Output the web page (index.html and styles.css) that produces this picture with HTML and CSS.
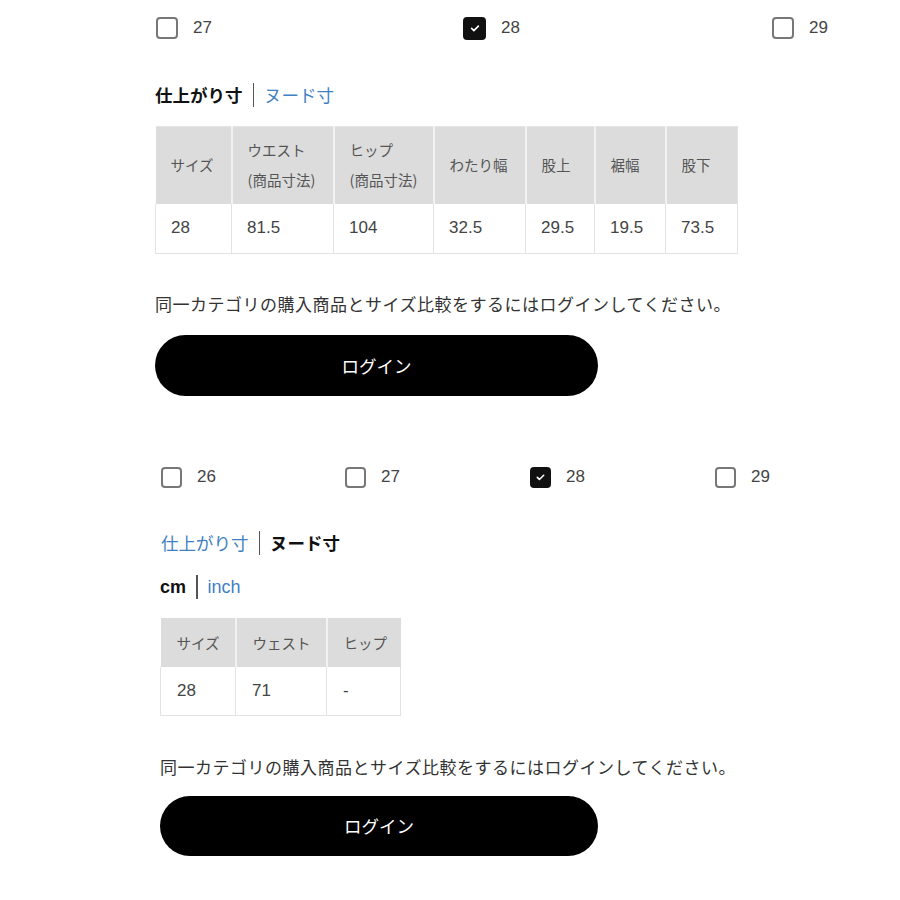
FILE: index.html
```html
<!DOCTYPE html>
<html lang="ja">
<head>
<meta charset="utf-8">
<link rel="stylesheet" href="styles.css">
</head>
<body>
<div class="page">
  <section class="block block-a">
    <div class="checks checks-a">
      <label class="check"><span class="box"></span><span class="num">27</span></label>
      <label class="check"><span class="box on"><svg viewBox="0 0 24 24"><path d="M7.5 12.5l3 3L16.5 9.5" fill="none" stroke="#fff" stroke-width="2.2" stroke-linecap="round" stroke-linejoin="round"/></svg></span><span class="num">28</span></label>
      <label class="check"><span class="box"></span><span class="num">29</span></label>
    </div>
    <div class="tabs tabs-a">
      <span class="tab active">仕上がり寸</span><span class="sep"></span><span class="tab link">ヌード寸</span>
    </div>
    <table class="size size-a">
      <thead>
        <tr>
          <th class="c1">サイズ</th>
          <th class="c2">ウエスト<br>(商品寸法)</th>
          <th class="c3">ヒップ<br>(商品寸法)</th>
          <th class="c4">わたり幅</th>
          <th class="c5">股上</th>
          <th class="c6">裾幅</th>
          <th class="c7">股下</th>
        </tr>
      </thead>
      <tbody>
        <tr><td>28</td><td>81.5</td><td>104</td><td>32.5</td><td>29.5</td><td>19.5</td><td>73.5</td></tr>
      </tbody>
    </table>
    <p class="note note-a">同一カテゴリの購入商品とサイズ比較をするにはログインしてください。</p>
    <button class="login login-a">ログイン</button>
  </section>

  <section class="block block-b">
    <div class="checks checks-b">
      <label class="check"><span class="box"></span><span class="num">26</span></label>
      <label class="check"><span class="box"></span><span class="num">27</span></label>
      <label class="check"><span class="box on"><svg viewBox="0 0 24 24"><path d="M7.5 12.5l3 3L16.5 9.5" fill="none" stroke="#fff" stroke-width="2.2" stroke-linecap="round" stroke-linejoin="round"/></svg></span><span class="num">28</span></label>
      <label class="check"><span class="box"></span><span class="num">29</span></label>
    </div>
    <div class="tabs tabs-b">
      <span class="tab link">仕上がり寸</span><span class="sep"></span><span class="tab active">ヌード寸</span>
    </div>
    <div class="tabs units">
      <span class="tab active unit">cm</span><span class="sep"></span><span class="tab link unit">inch</span>
    </div>
    <table class="size size-b">
      <thead>
        <tr><th class="d1">サイズ</th><th class="d2">ウェスト</th><th class="d3">ヒップ</th></tr>
      </thead>
      <tbody>
        <tr><td>28</td><td>71</td><td>-</td></tr>
      </tbody>
    </table>
    <p class="note note-b">同一カテゴリの購入商品とサイズ比較をするにはログインしてください。</p>
    <button class="login login-b">ログイン</button>
  </section>
</div>
</body>
</html>
```

FILE: styles.css
```css
* { box-sizing: border-box; }
html, body { margin: 0; padding: 0; background: #fff; }
body {
  font-family: "Noto Sans CJK JP", "Noto Sans", sans-serif;
  color: #333;
}
.page { display: flex; flex-direction: column; overflow: hidden; }
.block-a { padding-left: 155px; padding-top: 16px; }
.block-b { padding-left: 160px; padding-top: 69px; }

.checks { display: flex; }
.check { display: flex; align-items: center; gap: 15px; flex-shrink: 0; }
.checks-a .check { width: 308px; }
.checks-a .check:nth-child(2) { width: 309px; }
.checks-b .check { width: 185px; }
.checks-a .check:first-child { padding-left: 1px; }
.checks-b .check:first-child { padding-left: 1px; }
.box {
  width: 22px; height: 22px;
  border: 2px solid #777;
  border-radius: 4px;
  display: flex; align-items: center; justify-content: center;
  background: #fff;
}
.checks-a .box.on { width: 23px; height: 23px; }
.checks-b .box { width: 21px; height: 21px; }
.box.on { background: #111; border-color: #111; }
.box svg { width: 18px; height: 18px; }
.num {
  font-family: "Liberation Sans", "Noto Sans", sans-serif;
  font-size: 17px; color: #444; line-height: 24px;
}

.tabs { display: flex; align-items: center; height: 24px; }
.tabs-a { margin-top: 43px; }
.tabs-b { margin-top: 42px; margin-left: 1px; }
.units { margin-top: 20px; }
.tab { font-size: 17.5px; line-height: 24px; }
.tab.active { font-weight: 700; color: #111; }
.tab.link { color: #3f7fc4; }
.sep { width: 1.5px; height: 24px; background: #555; margin: 0 10px; }
.unit { font-family: "Liberation Sans", "Noto Sans", sans-serif; font-size: 18px; }

.size {
  border-collapse: collapse;
  font-size: 14.5px;
}
.size th {
  background: #dcdcdc;
  color: #555;
  font-weight: 400;
  text-align: left;
  vertical-align: middle;
  border-left: 2px solid #f2f2f2;
  padding: 0 0 0 15px;
  line-height: 30px;
}
.size th:first-child { border-left: none; }
.size td {
  border: 1px solid #e3e3e3;
  border-top: none;
  padding: 0 0 0 15px;
  font-family: "Liberation Sans", "Noto Sans", sans-serif;
  font-size: 17px;
  color: #444;
}
.size-a { margin-top: 19px; }
.size-a thead tr { height: 77px; }
.size-a tbody tr { height: 50px; }
.size-a .c1 { width: 76px; }
.size-a .c2 { width: 102px; }
.size-a .c3 { width: 100px; }
.size-a .c4 { width: 92px; }
.size-a .c5 { width: 69px; }
.size-a .c6 { width: 71px; }
.size-a .c7 { width: 72px; }
.size-a th { border-top: 1px solid #e3e3e3; }
.size-a th:last-child { border-right: 1px solid #e3e3e3; }

.size-b { margin-top: 19px; }
.size-b thead tr { height: 49px; }
.size-b tbody tr { height: 48px; }
.size-b th { padding-left: 16px; }
.size-b td { padding-left: 16px; }
.size-b .d1 { width: 75px; }
.size-b .d2 { width: 91px; }
.size-b .d3 { width: 74px; }

.note {
  margin: 0;
  font-size: 17px;
  line-height: 24px;
  color: #333;
  letter-spacing: 0.5px;
}
.note-a { margin-top: 38px; }
.note-b { margin-top: 39px; }

.login {
  display: flex; align-items: center; justify-content: center;
  border: none;
  background: #000;
  color: #fff;
  border-radius: 31px;
  font-family: "Noto Sans CJK JP", "Noto Sans", sans-serif;
  font-size: 17.5px;
  padding: 0;
}
.login-a { width: 443px; height: 61px; margin-top: 19px; }
.login-b { width: 438px; height: 60px; margin-top: 17px; }
```
